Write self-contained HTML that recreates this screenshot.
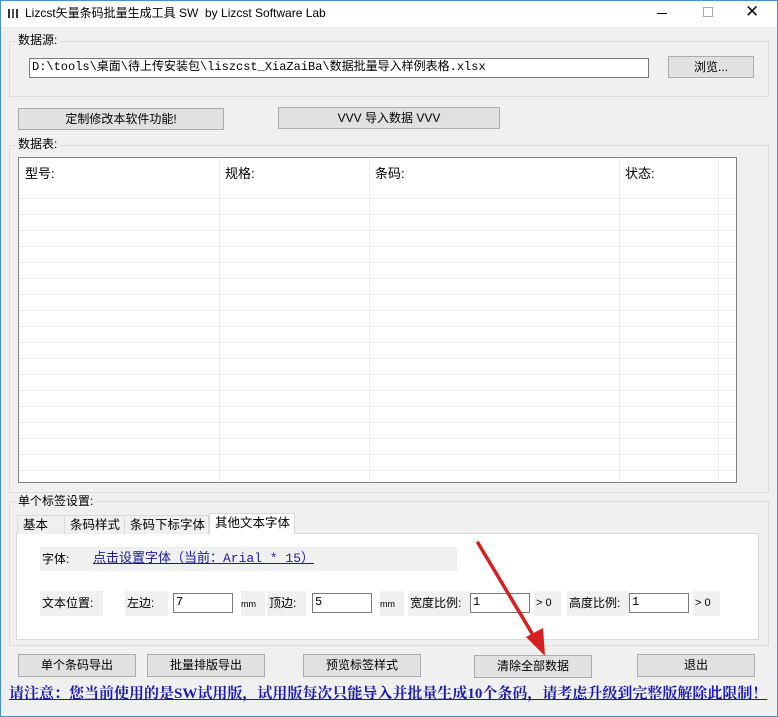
<!DOCTYPE html>
<html><head><meta charset="utf-8"><style>
*{margin:0;padding:0;box-sizing:border-box}
body{width:778px;height:717px;overflow:hidden;background:#f0f0f0;position:relative;font-family:"Liberation Sans","Noto Sans CJK SC",sans-serif;font-size:12px;color:#000}
.a{position:absolute}
.btn{position:absolute;background:#e1e1e1;border:1px solid #adadad;text-align:center;font-size:12px;line-height:20px}
.grp{position:absolute;border:1px solid #dcdcdc}
.lbl{position:absolute;background:#f0f0f0;padding:0 2px;font-size:12px;line-height:14px}
.inp{position:absolute;background:#fff;border:1px solid #7a7a7a;font-size:12px;line-height:17px;padding-left:2px;font-family:"Liberation Mono","Noto Sans CJK SC",monospace}
.gb{position:absolute;background:#f0f0f0;font-size:12px;line-height:24px;padding-left:2px}
</style></head><body>
<div class="a" style="left:0;top:0;width:778px;height:717px;border:1px solid #4a90c8;border-top:none"></div>
<div class="a" style="left:0;top:0;width:778px;height:27px;background:#fff;border:1px solid #4a90c8;border-bottom:none"></div>
<div class="a" style="left:8px;top:9px;width:10px;height:9px;border-left:2px solid #333;border-right:2px solid #333"><div style="margin-left:2px;width:2px;height:9px;background:#555"></div></div>
<div class="a" style="left:25px;top:5px;font-size:12px;line-height:16px">Lizcst矢量条码批量生成工具 SW&nbsp; by Lizcst Software Lab</div>
<div class="a" style="left:657px;top:13px;width:10px;height:1px;background:#000"></div>
<div class="a" style="left:703px;top:7px;width:10px;height:10px;border:1px solid #aaa"></div>
<div class="a" style="left:745px;top:2px;font-size:17px;line-height:20px;color:#111">✕</div>

<div class="grp" style="left:9px;top:41px;width:760px;height:56px"></div>
<div class="lbl" style="left:16px;top:33px">数据源:</div>
<div class="inp" style="left:29px;top:58px;width:620px;height:20px">D:\tools\桌面\待上传安装包\liszcst_XiaZaiBa\数据批量导入样例表格.xlsx</div>
<div class="btn" style="left:668px;top:56px;width:86px;height:22px">浏览...</div>
<div class="btn" style="left:18px;top:108px;width:206px;height:22px">定制修改本软件功能!</div>
<div class="btn" style="left:278px;top:107px;width:222px;height:22px">VVV 导入数据 VVV</div>

<div class="grp" style="left:9px;top:145px;width:760px;height:348px"></div>
<div class="lbl" style="left:16px;top:137px">数据表:</div>
<div class="a" style="left:18px;top:157px;width:719px;height:326px;background:#fff;border:1px solid #828282;overflow:hidden">
<svg width="719" height="326" style="position:absolute;left:0;top:0">
<g stroke="#ececec" stroke-width="1">
<line x1="0" y1="40.5" x2="719" y2="40.5"/><line x1="0" y1="56.5" x2="719" y2="56.5"/><line x1="0" y1="72.5" x2="719" y2="72.5"/><line x1="0" y1="88.5" x2="719" y2="88.5"/><line x1="0" y1="104.5" x2="719" y2="104.5"/><line x1="0" y1="120.5" x2="719" y2="120.5"/><line x1="0" y1="136.5" x2="719" y2="136.5"/><line x1="0" y1="152.5" x2="719" y2="152.5"/><line x1="0" y1="168.5" x2="719" y2="168.5"/><line x1="0" y1="184.5" x2="719" y2="184.5"/><line x1="0" y1="200.5" x2="719" y2="200.5"/><line x1="0" y1="216.5" x2="719" y2="216.5"/><line x1="0" y1="232.5" x2="719" y2="232.5"/><line x1="0" y1="248.5" x2="719" y2="248.5"/><line x1="0" y1="264.5" x2="719" y2="264.5"/><line x1="0" y1="280.5" x2="719" y2="280.5"/><line x1="0" y1="296.5" x2="719" y2="296.5"/><line x1="0" y1="312.5" x2="719" y2="312.5"/>
<line x1="200.5" y1="0" x2="200.5" y2="326"/><line x1="350.5" y1="0" x2="350.5" y2="326"/><line x1="600.5" y1="0" x2="600.5" y2="326"/><line x1="699.5" y1="0" x2="699.5" y2="326"/>
</g></svg>
<div class="a" style="left:6px;top:5px;font-size:13px">型号:</div>
<div class="a" style="left:206px;top:5px;font-size:13px">规格:</div>
<div class="a" style="left:356px;top:5px;font-size:13px">条码:</div>
<div class="a" style="left:606px;top:5px;font-size:13px">状态:</div>
</div>

<div class="grp" style="left:9px;top:501px;width:760px;height:145px"></div>
<div class="lbl" style="left:16px;top:494px">单个标签设置:</div>
<div class="a" style="left:16px;top:533px;width:743px;height:107px;background:#fff;border:1px solid #d9d9d9"></div>
<div class="a" style="left:17px;top:515px;width:48px;height:19px;border:1px solid #d9d9d9;border-bottom:none;background:#f0f0f0;padding-left:5px;font-size:12.5px;line-height:18px">基本</div>
<div class="a" style="left:65px;top:515px;width:60px;height:19px;border:1px solid #d9d9d9;border-bottom:none;border-left:none;background:#f0f0f0;padding-left:5px;font-size:12.5px;line-height:18px">条码样式</div>
<div class="a" style="left:125px;top:515px;width:84px;height:19px;border:1px solid #d9d9d9;border-bottom:none;border-left:none;background:#f0f0f0;padding-left:5px;font-size:12.5px;line-height:18px">条码下标字体</div>
<div class="a" style="left:209px;top:513px;width:86px;height:21px;border:1px solid #d9d9d9;border-bottom:none;background:#fff;padding-left:5px;font-size:12.5px;line-height:18px">其他文本字体</div>

<div class="gb" style="left:40px;top:547px;width:48px;height:24px">字体:</div>
<div class="gb" style="left:88px;top:547px;width:369px;height:24px;color:#1a1aa0;text-decoration:underline;padding-left:5px;font-size:13px;font-family:'Liberation Mono','Noto Sans CJK SC',monospace">点击设置字体（当前：Arial * 15）</div>

<div class="gb" style="left:40px;top:591px;width:63px;height:25px;line-height:25px">文本位置:</div>
<div class="gb" style="left:125px;top:591px;width:43px;height:25px;line-height:25px">左边:</div>
<div class="inp" style="left:173px;top:593px;width:60px;height:20px">7</div>
<div class="gb" style="left:241px;top:591px;width:24px;height:25px;line-height:27px;font-size:9px;padding-left:0">mm</div>
<div class="gb" style="left:267px;top:591px;width:39px;height:25px;line-height:25px">顶边:</div>
<div class="inp" style="left:312px;top:593px;width:60px;height:20px">5</div>
<div class="gb" style="left:380px;top:591px;width:24px;height:25px;line-height:27px;font-size:9px;padding-left:0">mm</div>
<div class="gb" style="left:408px;top:591px;width:62px;height:25px;line-height:25px">宽度比例:</div>
<div class="inp" style="left:470px;top:593px;width:60px;height:20px">1</div>
<div class="gb" style="left:534px;top:591px;width:27px;height:25px;line-height:25px;font-size:11px">&gt; 0</div>
<div class="gb" style="left:567px;top:591px;width:62px;height:25px;line-height:25px">高度比例:</div>
<div class="inp" style="left:629px;top:593px;width:60px;height:20px">1</div>
<div class="gb" style="left:693px;top:591px;width:27px;height:25px;line-height:25px;font-size:11px">&gt; 0</div>

<div class="btn" style="left:18px;top:654px;width:118px;height:23px">单个条码导出</div>
<div class="btn" style="left:147px;top:654px;width:118px;height:23px">批量排版导出</div>
<div class="btn" style="left:303px;top:654px;width:118px;height:23px">预览标签样式</div>
<div class="btn" style="left:474px;top:655px;width:118px;height:23px">清除全部数据</div>
<div class="btn" style="left:637px;top:654px;width:118px;height:23px">退出</div>

<div class="a" style="left:9px;top:685px;font-size:15px;font-weight:bold;line-height:18px;color:#1a1ab0;text-decoration:underline;white-space:nowrap;font-family:'Liberation Serif','Noto Serif CJK SC',serif">请注意：您当前使用的是SW试用版，试用版每次只能导入并批量生成10个条码，请考虑升级到完整版解除此限制！</div>

<svg class="a" style="left:0;top:0" width="778" height="717">
<line x1="478" y1="543" x2="536" y2="640" stroke="#d42020" stroke-width="3.5" stroke-linecap="round"/>
<polygon points="545,656 526,637 543,628" fill="#d42020"/>
</svg>
</body></html>
